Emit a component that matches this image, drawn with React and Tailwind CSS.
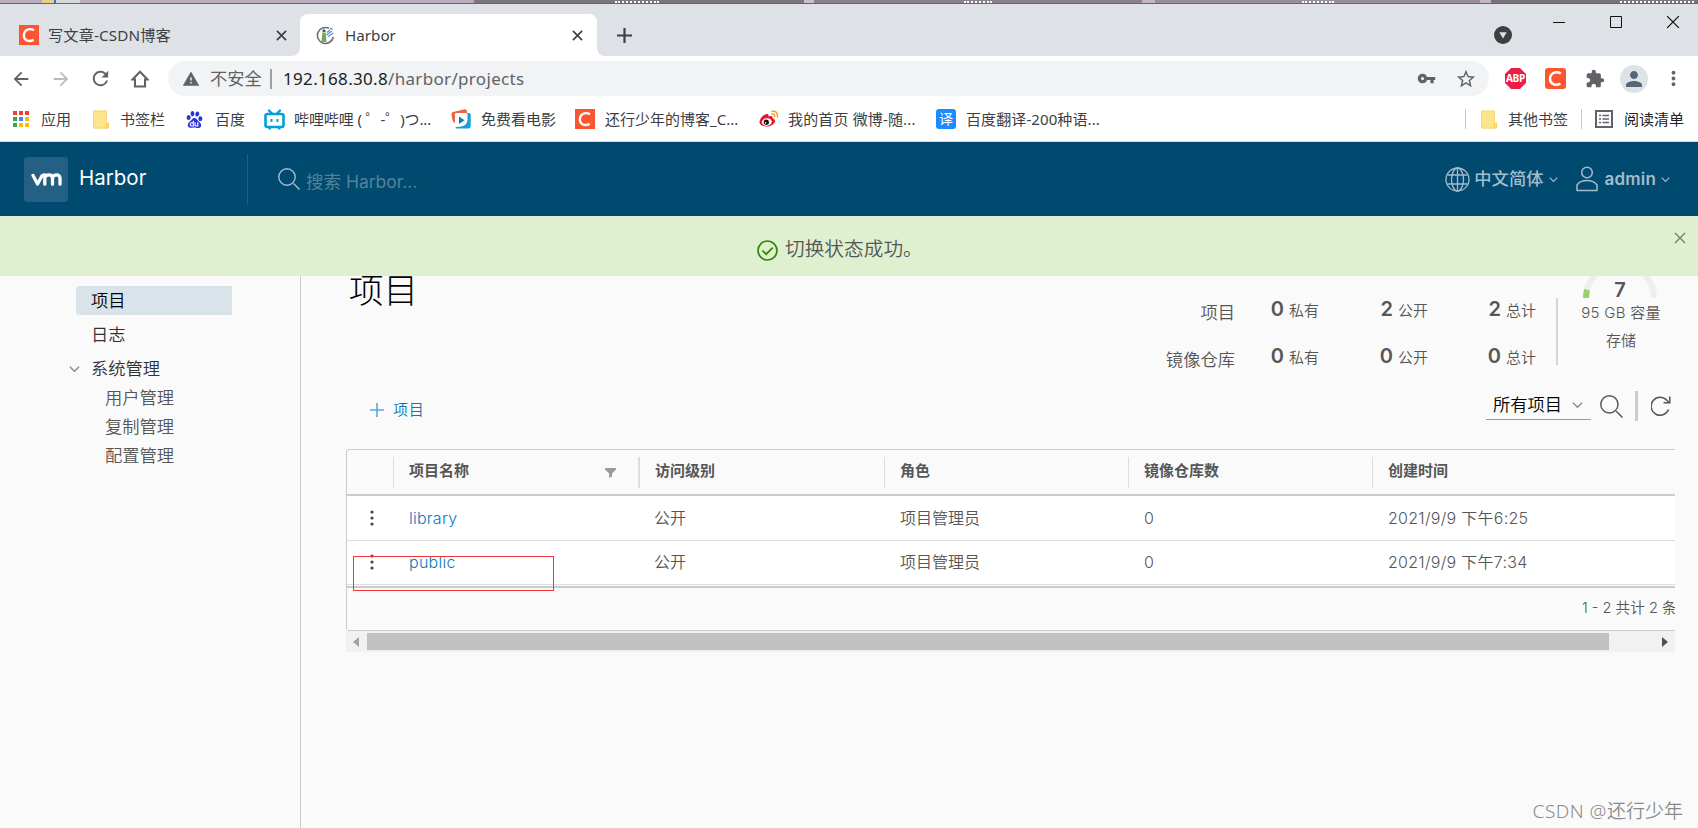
import clsx from 'clsx';
import {
  MdArrowBack,
  MdArrowForward,
  MdExtension,
  MdMoreVert,
  MdPerson,
  MdRefresh,
  MdStarBorder,
  MdVpnKey,
  MdWarning,
} from 'react-icons/md';
import { SiBaidu } from 'react-icons/si';

const PROJECTS = [
  { name: 'library', access: '公开', role: '项目管理员', repos: 0, created: '2021/9/9 下午6:25' },
  { name: 'public', access: '公开', role: '项目管理员', repos: 0, created: '2021/9/9 下午7:34' },
];

const STATS = [
  { label: '项目', priv: 0, pub: 2, total: 2 },
  { label: '镜像仓库', priv: 0, pub: 0, total: 0 },
];

function CsdnIcon({ className }) {
  return (
    <svg className={className} viewBox="0 0 20 20">
      <rect width="20" height="20" fill="#fc5531" />
      <path
        d="M15 5.3C10.500 2.600 5 4.800 4.800 10.300C4.700 15.500 9.800 17.300 14.700 14.900"
        fill="none"
        stroke="#fff"
        strokeWidth="2.300"
      />
    </svg>
  );
}

function HarborIcon() {
  return (
    <svg className="size-[19px]" viewBox="0 0 19 19" fill="none">
      <path d="M13 2.300A8 8 0 1 0 17.300 11" stroke="#6b6f72" strokeWidth="1.600" />
      <path d="M6.300 6.500h3.400l.8 9.500H5.500z" fill="#7aa65a" />
      <path d="M6.500 6V4.200L8 3l1.500 1.200V6z" fill="#4c5a50" />
      <path d="M11 6.500l3-2.500M10.500 9l5.500-4M12 10.500l5.500-3.500M14 2.500l2.500.5" stroke="#5f93c4" strokeWidth="1.300" />
    </svg>
  );
}

function FolderIcon() {
  return (
    <svg className="h-[19px] w-4" viewBox="0 0 16 19">
      <path d="M1 .5h12.500v12H16V17l-1.500 1.500H1a1 1 0 0 1-1-1v-16a1 1 0 0 1 1-1z" fill="#fee58c" />
      <path d="M13.500 18.500V14a1.200 1.200 0 0 1 2 0v3q0 1.200-2 1.500" fill="none" stroke="#eecb4c" strokeWidth=".9" />
      <path d="M13.500 12V1H.5v17h13" fill="none" stroke="#f5d66f" strokeWidth=".9" />
    </svg>
  );
}

function AppsIcon() {
  const colors = ['#ea4335', '#ea4335', '#ea4335', '#34a853', '#4285f4', '#fbbc04', '#34a853', '#fbbc04', '#fbbc04'];
  return (
    <div className="grid grid-cols-3 gap-[2px]">
      {colors.map((c, i) => (
        <span key={i} className="size-[4px]" style={{ background: c }}></span>
      ))}
    </div>
  );
}

function BiliIcon() {
  return (
    <svg className="size-[21px]" viewBox="0 0 21 21" fill="none" stroke="#00a1d6">
      <rect x="1.500" y="5" width="18" height="13" rx="2" strokeWidth="2.600" />
      <path d="M5 1.500l3 3M16 1.500l-3 3" strokeWidth="2.400" strokeLinecap="round" />
      <path d="M7.500 10v3M13.500 10v3" strokeWidth="2" />
      <path d="M4.500 19.700h2.500M14 19.700h2.500" strokeWidth="1.500" />
    </svg>
  );
}

function MovieIcon() {
  return (
    <svg className="size-5" viewBox="0 0 20 20">
      <path d="M.5 5Q.3 3.500 2 3L13.500.3Q15.500 0 16 2V4H5.500Q4 4 4 6v8Q1.500 13 1 9z" fill="#ee6248" />
      <path d="M16 4h2q1.700 0 1.700 2v11q0 2.500-2.500 2.500H6q-1.500 0-1.500-1.500l7-1Q16 15 16 11z" fill="#1a9ee0" />
      <path d="M4 4.500h11.500q1 0 1 1V11q-.5 5.500-7 6.500L4.500 18z" fill="#fff" />
      <path d="M8 7.500l5.500 3.700-5.500 3.700z" fill="#1478c0" />
    </svg>
  );
}

function WeiboIcon() {
  return (
    <svg className="size-5" viewBox="0 0 20 20" fill="none">
      <path
        d="M7.500 5C9.500 4.600 9.800 6 9.300 7.500C12 6.500 14 7 13.600 9.300C16 10 16.700 12 15 14.500C11 19 1.500 18.500.5 13.500C.3 10 4 5.800 7.500 5z"
        fill="#e6162d"
      />
      <ellipse cx="7.800" cy="13" rx="5" ry="3.700" fill="#fff" transform="rotate(-10 7.800 13)" />
      <circle cx="7.300" cy="13.200" r="2.600" fill="#111" />
      <circle cx="6.600" cy="13.900" r=".8" fill="#fff" />
      <path d="M13 2.200Q18.800 1.500 18.600 8.200M12.800 5Q15.800 4.600 15.700 7.700" stroke="#f7a21b" strokeWidth="1.500" strokeLinecap="round" />
    </svg>
  );
}

function ReadingListIcon() {
  return (
    <svg className="h-[18px] w-[18px]" viewBox="0 0 18 18" fill="none" stroke="#5f6368">
      <rect x="1" y="1" width="16" height="16" strokeWidth="2" />
      <path d="M4 5.500h2M4 9h2M4 12.500h2M7.500 5.500h6.500M7.500 9h6.500M7.500 12.500h6.500" strokeWidth="1.500" />
    </svg>
  );
}

function Chevron({ className }) {
  return (
    <svg className={className} viewBox="0 0 12 8" fill="none" stroke="currentColor">
      <path d="M1 1.500l5 5 5-5" strokeWidth="1.500" />
    </svg>
  );
}

function SearchIcon({ className }) {
  return (
    <svg className={className} viewBox="0 0 22 22" fill="none" stroke="currentColor" strokeWidth="1.400">
      <circle cx="9" cy="9" r="8.200" />
      <path d="M15.500 15.500l6 6" />
    </svg>
  );
}

function CloseIcon({ className, width = 1.8 }) {
  return (
    <svg className={className} viewBox="0 0 12 12" fill="none" stroke="currentColor" strokeWidth={width}>
      <path d="M1 1l10 10M11 1L1 11" />
    </svg>
  );
}

// what shows of the window behind the browser
function DesktopStrip() {
  return (
    <div className="flex h-1 shrink-0 border-b border-[#67656a] bg-[#938b94]">
      <div className="w-[42px] bg-[#b8aebb]"></div>
      <div className="w-3 bg-[#e6cf86]"></div>
      <div className="w-[2px] bg-[#3473c8]"></div>
      <div className="w-6 bg-[#d8d8dc]"></div>
      <div className="w-[394px] bg-[#b8aebb]"></div>
      <div className="flex w-[330px] justify-center bg-[#7c767d] pr-1">
        <span className="mt-px h-px w-11 border-t-2 border-dotted border-white"></span>
      </div>
      <div className="w-[10px] bg-[#c9c0cc]"></div>
      <div className="flex w-[328px] justify-center bg-[#89828a]">
        <span className="mt-px h-px w-7 border-t-2 border-dotted border-white"></span>
      </div>
      <div className="w-[13px] bg-[#c2b6c4]"></div>
      <div className="flex w-[325px] justify-center bg-[#968f97]">
        <span className="mt-px h-px w-8 border-t-2 border-dotted border-white"></span>
      </div>
      <div className="w-[11px] bg-[#c2b6c4]"></div>
      <div className="flex flex-1 justify-end bg-[#79747a] pr-1">
        <span className="mt-px h-px w-[74px] border-t-2 border-dotted border-white"></span>
      </div>
    </div>
  );
}

function TabBar() {
  return (
    <div className="flex h-[52px] shrink-0 bg-[#dee1e6] text-[15px] text-[#3c4043]">
      <div className="flex w-[300px] items-center pt-[10px] pl-[19px]">
        <CsdnIcon className="size-5" />
        <span className="ml-[9px] w-[228px] text-[15.200px] tracking-[0.15px]">写文章-CSDN博客</span>
        <CloseIcon className="size-[11px] text-[#3c4043]" />
      </div>
      <div className="relative mt-[10px] flex w-[297px] items-center rounded-t-lg bg-white pl-4">
        <span className="absolute bottom-0 -left-2 size-2 bg-white">
          <span className="block size-2 rounded-br-lg bg-[#dee1e6]"></span>
        </span>
        <span className="absolute -right-2 bottom-0 size-2 bg-white">
          <span className="block size-2 rounded-bl-lg bg-[#dee1e6]"></span>
        </span>
        <HarborIcon />
        <span className="ml-[10px] w-[227px] text-[15.200px]">Harbor</span>
        <CloseIcon className="size-[11px] text-[#3c4043]" />
      </div>
      <svg className="mt-[24px] ml-5 size-[15px]" viewBox="0 0 15 15" stroke="#3c4043" strokeWidth="2.200">
        <path d="M7.500 0v15M0 7.500h15" />
      </svg>
      <div className="ml-auto flex">
        <svg className="mt-[22px] mr-[41px] size-[18px]" viewBox="0 0 18 18">
          <circle cx="9" cy="9" r="9" fill="#3c4043" />
          <path d="M5.300 6.300h7.400L9 12.500z" fill="#dee1e6" />
        </svg>
        <svg className="mt-3 mr-[45px] size-3" viewBox="0 0 12 12" stroke="#111">
          <path d="M0 6.500h12" />
        </svg>
        <svg className="mt-3 mr-[44px] size-3" viewBox="0 0 12 12" stroke="#111" fill="none">
          <path d="M.5.5h11v11H.5z" />
        </svg>
        <CloseIcon className="mt-[11px] mr-[18px] size-[14px] text-[#111]" width={1.1} />
      </div>
    </div>
  );
}

function AddressBar() {
  return (
    <div className="flex h-[45px] shrink-0 items-center bg-white text-[#5f6368]">
      <MdArrowBack className="ml-[10px] size-[22px]" />
      <MdArrowForward className="ml-[18px] size-[22px] text-[#babcbe]" />
      <MdRefresh className="ml-[17px] size-[23px]" />
      <svg className="ml-[19px] size-[18px]" viewBox="0 0 18 18" fill="none" stroke="#5f6368" strokeWidth="2">
        <path d="M1.500 9.500L9 1.800l7.500 7.700H14V16.500H4V9.500z" />
      </svg>
      <div className="ml-[19px] flex h-[35px] w-[1321px] items-center rounded-full bg-[#f1f3f4] pl-[14px]">
        <MdWarning className="size-[18px]" />
        <span className="ml-[10px] w-[60px] text-[17.300px]">不安全</span>
        <span className="h-5 w-[2px] bg-[#9aa0a6]"></span>
        <span className="ml-[11px] text-[17px] tracking-[0.320px] whitespace-nowrap">
          <span className="text-[#202124]">192.168.30.8</span>/harbor/projects
        </span>
        <MdVpnKey className="ml-auto size-[19px]" />
        <MdStarBorder className="mr-[12px] ml-[19px] size-[22px]" />
      </div>
      <div className="ml-4 flex size-[21px] shrink-0 items-center justify-center bg-[#ed1e45] font-['Open_Sans'] text-[10px] font-bold tracking-tight text-white [clip-path:polygon(29%_0,71%_0,100%_29%,100%_71%,71%_100%,29%_100%,0_71%,0_29%)]">
        ABP
      </div>
      <CsdnIcon className="ml-[19px] size-[21px] shrink-0 rounded-[3px]" />
      <MdExtension className="ml-[19px] size-5 shrink-0" />
      <span className="ml-[15px] flex size-7 shrink-0 items-center justify-center rounded-full bg-[#dee1e6]">
        <MdPerson className="size-[24px] text-[#55657c]" />
      </span>
      <MdMoreVert className="ml-[14px] size-[23px] shrink-0" />
    </div>
  );
}

function Bookmark({ icon, label, width, gap, text }) {
  return (
    <div className={clsx('flex shrink-0 items-center whitespace-nowrap', width)}>
      {icon}
      <span className={clsx(gap, text)}>{label}</span>
    </div>
  );
}

function BookmarkBar() {
  return (
    <div className="flex h-[41px] shrink-0 items-center border-b border-[#d5dbdb] bg-white pb-1 pl-[13px] text-[15px] text-[#3c4043]">
      <Bookmark width="w-[80px]" gap="ml-3" icon={<AppsIcon />} label="应用" />
      <Bookmark width="w-[93px]" gap="ml-[11px]" icon={<FolderIcon />} label="书签栏" />
      <Bookmark width="w-[78px]" gap="ml-3" icon={<SiBaidu className="size-[17px] text-[#2932e1]" />} label="百度" />
      <Bookmark width="w-[187px]" gap="ml-[9px]" icon={<BiliIcon />} label="哔哩哔哩 ( ゜-゜)つ..." text="tracking-[-0.1px]" />
      <Bookmark width="w-[124px]" gap="ml-[10px]" icon={<MovieIcon />} label="免费看电影" />
      <Bookmark width="w-[184px]" gap="ml-[10px]" icon={<CsdnIcon className="size-5" />} label="还行少年的博客_C..." />
      <Bookmark width="w-[177px]" gap="ml-[9px]" icon={<WeiboIcon />} label="我的首页 微博-随..." text="tracking-[0.15px]" />
      <Bookmark
        width="w-[180px]"
        gap="ml-[10px]"
        icon={<span className="flex size-5 items-center justify-center rounded-[3px] bg-[#1a8cff] text-[14px] leading-none text-white">译</span>}
        label="百度翻译-200种语..."
        text="tracking-[0.1px]"
      />
      <div className="ml-auto flex items-center">
        <span className="mr-[15px] h-5 w-px bg-[#c6c9cc]"></span>
        <Bookmark width="w-[100px]" gap="ml-[11px]" icon={<FolderIcon />} label="其他书签" />
        <span className="mr-[13px] h-5 w-px bg-[#c6c9cc]"></span>
        <Bookmark width="w-[103px]" gap="ml-[11px]" icon={<ReadingListIcon />} label="阅读清单" text="text-[#202124]" />
      </div>
    </div>
  );
}

function HarborHeader() {
  return (
    <header className="flex h-[74px] shrink-0 items-center bg-[#004a70] text-white">
      <div className="ml-6 flex h-[45px] w-11 items-center justify-center rounded-[3px] bg-[#246083]">
        <svg className="h-[13px] w-[31px]" viewBox="0 0 31 14" preserveAspectRatio="none" fill="none" stroke="#fff" strokeWidth="3.300" strokeLinecap="round" strokeLinejoin="round">
          <path d="M2 2.500l4.500 9.500L11 3Q12 1.800 13.800 2v10M13.800 5Q14.500 2 18 2T21.500 5.500V12M21.500 5Q22.500 2 25.500 2T29 5.500V12" />
        </svg>
      </div>
      <span className="ml-[11px] w-[168px] pb-px text-[20.500px]">Harbor</span>
      <span className="h-[50px] w-px bg-[#1f5f82]"></span>
      <SearchIcon className="ml-[30px] size-[22px] text-[#a3bccb]" />
      <span className="mt-[6px] ml-[6px] text-[17.500px] text-[#548299]">搜索 Harbor...</span>
      <div className="ml-auto flex items-center text-[#a3bccb]">
        <svg className="size-[25px]" viewBox="0 0 25 25" fill="none" stroke="currentColor" strokeWidth="1.300">
          <circle cx="12.500" cy="12.500" r="11.500" />
          <ellipse cx="12.500" cy="12.500" rx="6" ry="11.500" />
          <path d="M12.500 1v23M2.500 8h20M2.500 17h20" />
        </svg>
        <span className="ml-[4px] text-[17.300px] font-medium">中文简体</span>
        <Chevron className="ml-[6px] h-[7px] w-[9px]" />
        <svg className="ml-[18px] h-[26px] w-[22px]" viewBox="0 0 22 26" fill="none" stroke="currentColor" strokeWidth="1.500">
          <circle cx="11" cy="6.500" r="5.300" />
          <path d="M1 24.500V19Q4 14.500 11 14.500T21 19V24.500z" strokeLinejoin="round" />
        </svg>
        <span className="ml-[6px] pt-[2px] text-[17px] font-semibold tracking-[0.2px]">admin</span>
        <Chevron className="mr-[28px] ml-[5px] h-[7px] w-[9px]" />
      </div>
    </header>
  );
}

function Alert() {
  return (
    <div className="flex h-[60px] shrink-0 bg-[#dff0d0]">
      <div className="flex h-[66px] items-center pl-[757px] text-[#565656]">
        <svg className="mt-[3px] size-[21px]" viewBox="0 0 21 21" fill="none" stroke="#318700" strokeWidth="1.700">
          <circle cx="10.500" cy="10.500" r="9.500" />
          <path d="M5.500 10.500l3.700 3.700 6.500-6.500" />
        </svg>
        <span className="mt-[2px] ml-[7px] text-[19.700px] font-[350]">切换状态成功。</span>
      </div>
      <CloseIcon className="mt-4 mr-3 ml-auto size-3 text-[#737373]" width={1.1} />
    </div>
  );
}

function Sidebar() {
  return (
    <nav className="w-[301px] shrink-0 border-r border-[#ccc] pt-[10px] text-[17.300px] font-[350] text-[#313131]">
      <div className="ml-[76px] flex h-[29px] w-[156px] items-center rounded-l-[3px] bg-[#d9e4ea] pl-[15px] text-black">项目</div>
      <div className="mt-[5px] flex h-[29px] items-center pl-[91px]">日志</div>
      <div className="mt-[5px] flex h-[29px] items-center pl-[69px]">
        <Chevron className="mr-[11px] h-[8px] w-[11px] text-[#8c8c8c]" />
        系统管理
      </div>
      <div className="pl-[105px] text-[#565656]">
        {['用户管理', '复制管理', '配置管理'].map(item => (
          <div key={item} className="flex h-[29px] items-center">
            {item}
          </div>
        ))}
      </div>
    </nav>
  );
}

function Stat({ value, label, className }) {
  return (
    <div className={clsx('flex items-baseline justify-end gap-[5px]', className)}>
      <span className="text-[20px] font-semibold">{value}</span>
      <span className="text-[15px]">{label}</span>
    </div>
  );
}

function Summary() {
  return (
    <div className="flex font-[350] text-[#565656]">
      <div className="pt-[18px]">
        {STATS.map(s => (
          <div key={s.label} className="flex h-[46.500px] leading-[30px]">
            <span className="w-[80px] pt-[4px] text-right text-[17.300px]">{s.label}</span>
            <Stat className="w-[84px]" value={s.priv} label="私有" />
            <Stat className="w-[109px]" value={s.pub} label="公开" />
            <Stat className="w-[108px]" value={s.total} label="总计" />
          </div>
        ))}
      </div>
      <span className="mt-[22px] ml-[20px] h-[67px] w-[2px] bg-[#d5d5d5]"></span>
      <div className="relative -mt-[15px] ml-[22px] flex w-[80px] flex-col items-center text-[15px]">
        <svg className="h-[37px] w-[74px]" viewBox="0 0 74 37" fill="none" strokeWidth="6">
          <path d="M3 37A34 34 0 0 1 71 37" stroke="#eee" />
          <path d="M3 37A34 34 0 0 1 4 28.700" stroke="#9bd06f" />
        </svg>
        <span className="absolute top-[17px] text-[20px] leading-6 font-semibold">7</span>
        <span className="mt-[3px] ml-[2px] leading-6 tracking-[0.3px] whitespace-nowrap">95 GB 容量</span>
        <span className="mt-1 ml-[2px] leading-6">存储</span>
      </div>
    </div>
  );
}

function Toolbar() {
  return (
    <div className="flex h-[60px] items-center text-[#565656]">
      <div className="flex items-center pt-[8px] pl-[24px] text-[15px] font-[350] tracking-[0.8px] text-[#0079b8]">
        <svg className="mr-[9px] size-[14px]" viewBox="0 0 14 14" stroke="#5aa9d3" strokeWidth="1.600">
          <path d="M7 0v14M0 7h14" />
        </svg>
        项目
      </div>
      <div className="mr-[9px] mb-[2px] ml-auto flex h-[30px] w-[105px] items-center border-b border-[#9a9a9a] pl-[7px] text-[17.300px] font-[350] text-black">
        所有项目
        <Chevron className="ml-[10px] h-[8px] w-[11px] text-[#8c8c8c]" />
      </div>
      <SearchIcon className="size-[23px]" />
      <span className="ml-[12px] h-[30px] w-[3px] bg-[#ccc]"></span>
      <svg className="mr-[4px] ml-[13px] size-[20px]" viewBox="0 0 20 20" fill="none" stroke="currentColor" strokeWidth="1.500">
        <path d="M17.500 13.500A9 9 0 1 1 16 4.500L18.300 6.500M18.800 .5V6.800H12.500" />
      </svg>
    </div>
  );
}

function Header({ label, width, divider, filter }) {
  return (
    <div className={clsx('flex shrink-0 items-center', width)}>
      <span className={clsx('h-[31px] bg-[#ddd]', divider)}></span>
      <span className="ml-[15px] pb-[2px]">{label}</span>
      {filter && (
        <svg className="mt-px mr-[22px] ml-auto h-[10px] w-[11px]" viewBox="0 0 11 10" fill="#9a9a9a">
          <path d="M0 0h11v1.500L7 5.500V8.500L4.200 10V5.500L0 1.500z" />
        </svg>
      )}
    </div>
  );
}

function ProjectTable() {
  return (
    <div className="w-[1329px] overflow-hidden">
      <div className="w-[1344px] rounded-[3px] border border-[#ccc]">
        <div className="flex h-[46px] items-center border-b-2 border-[#ccc] pl-[46px] text-[15px] font-bold text-[#565656]">
          <Header width="w-[245px]" divider="w-px" label="项目名称" filter />
          <Header width="w-[246px]" divider="w-[2px]" label="访问级别" />
          <Header width="w-[244px]" divider="w-px" label="角色" />
          <Header width="w-[244px]" divider="w-px" label="镜像仓库数" />
          <Header width="w-[244px]" divider="w-px" label="创建时间" />
        </div>
        {PROJECTS.map((p, i) => (
          <div
            key={p.name}
            className={clsx(
              'flex items-center border-b border-[#ddd] bg-white pl-[23px] text-[16px] font-[350] text-[#565656]',
              i === 0 ? 'h-[45px]' : 'h-[44px] pb-[2px]'
            )}
          >
            <svg className="h-4 w-1" viewBox="0 0 4 16" fill="#454545">
              <circle cx="2" cy="2" r="1.600" />
              <circle cx="2" cy="8" r="1.600" />
              <circle cx="2" cy="14" r="1.600" />
            </svg>
            <span className="ml-[35px] w-[245px] tracking-[0.25px] text-[#0079b8]">{p.name}</span>
            <span className="w-[246px]">{p.access}</span>
            <span className="w-[244px]">{p.role}</span>
            <span className="w-[244px]">{p.repos}</span>
            <span className="tracking-[0.28px]">{p.created}</span>
          </div>
        ))}
        <div className="mt-px flex h-[44px] items-center border-t-2 border-[#ccc] pl-[1235px] text-[14.600px] font-[350] whitespace-nowrap text-[#565656]">
          1 - 2 共计 2 条
        </div>
      </div>
      <div className="flex h-[21px] items-center bg-[#f1f1f1] pl-[7px]">
        <svg className="h-[10px] w-[6px]" viewBox="0 0 6 10" fill="#a3a3a3">
          <path d="M6 0v10L0 5z" />
        </svg>
        <span className="ml-2 h-[17px] w-[1242px] bg-[#c1c1c1]"></span>
        <svg className="ml-[53px] h-[10px] w-[6px]" viewBox="0 0 6 10" fill="#505050">
          <path d="M0 0v10l6-5z" />
        </svg>
      </div>
    </div>
  );
}

function Projects() {
  return (
    <main className="relative flex-1 pl-[45px]">
      <div className="flex h-[100px] justify-between">
        <h1 className="-mt-[10px] pl-[3px] text-[34.500px] leading-[50px] font-light text-black">项目</h1>
        <div className="pr-[38px]">
          <Summary />
        </div>
      </div>
      <div className="h-[73px] pr-[23px]">
        <Toolbar />
      </div>
      <ProjectTable />
      {/* highlight around the new project */}
      <div className="absolute top-[280px] left-[52px] h-[35px] w-[201px] border border-[#f5363a]"></div>
      <div className="absolute right-[15px] bottom-[2px] text-[19px] font-[350] whitespace-nowrap text-[#8a8a8a]">
        <span className="font-['Noto_Sans'] tracking-[0.5px]">CSDN @</span>还行少年
      </div>
    </main>
  );
}

export default function App() {
  return (
    <div className="flex h-[828px] w-[1698px] flex-col overflow-hidden bg-[#fafafa] font-['Noto_Sans','Noto_Sans_CJK_SC',sans-serif]">
      <DesktopStrip />
      <TabBar />
      <AddressBar />
      <BookmarkBar />
      <div className="flex min-h-0 flex-1 flex-col font-['Inter','Noto_Sans_CJK_SC',sans-serif]">
        <HarborHeader />
        <Alert />
        <div className="flex min-h-0 flex-1 overflow-hidden">
          <Sidebar />
          <Projects />
        </div>
      </div>
    </div>
  );
}
